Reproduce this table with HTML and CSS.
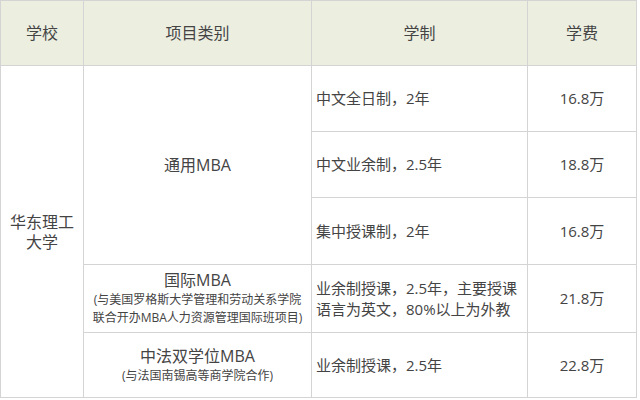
FILE: index.html
```html
<!DOCTYPE html>
<html lang="zh-CN">
<head>
<meta charset="utf-8">
<title>华东理工大学 MBA</title>
<link rel="stylesheet" href="styles.css">
</head>
<body>
<table class="fees">
  <colgroup>
    <col class="c-school">
    <col class="c-type">
    <col class="c-mode">
    <col class="c-fee">
  </colgroup>
  <thead>
    <tr class="r-head">
      <th>学校</th>
      <th>项目类别</th>
      <th>学制</th>
      <th>学费</th>
    </tr>
  </thead>
  <tbody>
    <tr class="r1">
      <td class="school" rowspan="5">华东理工<br>大学</td>
      <td class="type" rowspan="3">通用MBA</td>
      <td class="mode">中文全日制，2年</td>
      <td class="fee">16.8万</td>
    </tr>
    <tr class="r2">
      <td class="mode">中文业余制，2.5年</td>
      <td class="fee">18.8万</td>
    </tr>
    <tr class="r3">
      <td class="mode">集中授课制，2年</td>
      <td class="fee">16.8万</td>
    </tr>
    <tr class="r4">
      <td class="type">国际MBA<span class="note">(与美国罗格斯大学管理和劳动关系学院<br>联合开办MBA人力资源管理国际班项目)</span></td>
      <td class="mode">业余制授课，2.5年，主要授课<br>语言为英文，80%以上为外教</td>
      <td class="fee">21.8万</td>
    </tr>
    <tr class="r5">
      <td class="type">中法双学位MBA<span class="note">(与法国南锡高等商学院合作)</span></td>
      <td class="mode">业余制授课，2.5年</td>
      <td class="fee">22.8万</td>
    </tr>
  </tbody>
</table>
</body>
</html>
```
FILE: styles.css
```css
html, body {
  margin: 0;
  padding: 0;
  background: #ffffff;
}

body {
  font-family: "Open Sans", "Noto Sans CJK SC", sans-serif;
  color: #444444;
}

.fees {
  border-collapse: collapse;
  table-layout: fixed;
  width: 636px;
}

.c-school { width: 83px; }
.c-type { width: 228px; }
.c-mode { width: 216px; }
.c-fee { width: 109px; }

.fees th,
.fees td {
  border: 1px solid #d4d4d4;
  padding: 0;
  vertical-align: middle;
  text-align: center;
  font-weight: normal;
}

.fees th {
  background: #eceee0;
  font-size: 16px;
  line-height: 20px;
}

.r-head { height: 65px; }
.r1 { height: 66px; }
.r2 { height: 66px; }
.r3 { height: 67px; }
.r4 { height: 68px; }
.r5 { height: 65px; }

.fees .school {
  font-size: 16px;
  line-height: 20px;
  padding: 0 4px;
}

.fees .type {
  font-size: 16px;
  line-height: 20px;
  padding: 0 2px;
}

.note {
  display: block;
  font-size: 12px;
  line-height: 18px;
  margin-top: 1px;
  white-space: nowrap;
}

.fees .mode {
  text-align: left;
  font-size: 15px;
  line-height: 21px;
  padding: 0 4px;
}

.fees .fee {
  font-size: 15px;
  line-height: 21px;
}
```
